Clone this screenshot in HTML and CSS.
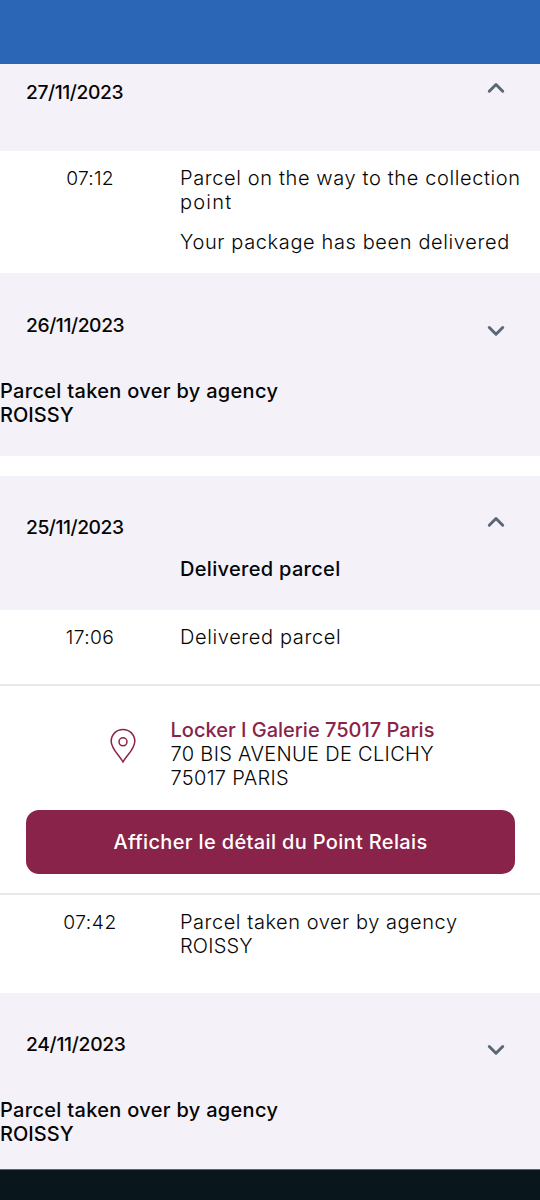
FILE: index.html
```html
<!DOCTYPE html>
<html lang="en">
<head>
<meta charset="utf-8">
<meta name="viewport" content="width=device-width, initial-scale=1">
<title>Parcel tracking</title>
<link rel="stylesheet" href="styles.css">
</head>
<body>
<div class="screen">
  <header class="status-bar"></header>

  <section class="day day-first">
    <h2 class="date">27/11/2023</h2>
    <svg class="chevron" viewBox="0 0 18 12"><path d="M2.3 9.2 9 2.5l6.700 6.700"/></svg>
  </section>
  <div class="event event-first">
    <time class="time time-0712">07:12</time>
    <div class="detail">
      <p class="text-long">Parcel on the way to the collection<br><span class="text-point">point</span></p>
      <p class="text-long note">Your package has been delivered</p>
    </div>
  </div>

  <section class="day day-closed">
    <div class="day-head">
      <h2 class="date">26/11/2023</h2>
      <svg class="chevron" viewBox="0 0 18 12"><path d="M2.3 2.500 9 9.200l6.700-6.700"/></svg>
    </div>
    <p class="summary">Parcel taken over by agency<br><span class="city">ROISSY</span></p>
  </section>

  <section class="day day-open">
    <div class="day-head">
      <h2 class="date date-25">25/11/2023</h2>
      <svg class="chevron" viewBox="0 0 18 12"><path d="M2.3 9.200 9 2.500l6.700 6.700"/></svg>
    </div>
    <p class="summary summary-inset">Delivered parcel</p>
  </section>
  <div class="event event-delivered">
    <time class="time time-1706">17:06</time>
    <p class="detail text-long">Delivered parcel</p>
  </div>

  <section class="relay">
    <div class="relay-info">
      <svg class="pin" viewBox="0 0 26 36"><path d="M13 34C9.500 27.500 1.200 21 1.200 13.200a11.800 11.800 0 0 1 23.600 0C24.800 21 16.500 27.500 13 34Z"/><circle cx="13" cy="13.800" r="4"/></svg>
      <address class="address">
        <strong class="relay-name">Locker I Galerie 75017 Paris</strong>
        <span>70 BIS AVENUE DE CLICHY</span>
        <span>75017 PARIS</span>
      </address>
    </div>
    <button class="relay-button" type="button">Afficher le détail du Point Relais</button>
  </section>

  <div class="event event-agency">
    <time class="time time-0742">07:42</time>
    <p class="detail text-agency">Parcel taken over by agency<br><span class="city-light">ROISSY</span></p>
  </div>

  <section class="day day-closed day-last">
    <div class="day-head">
      <h2 class="date date-24">24/11/2023</h2>
      <svg class="chevron" viewBox="0 0 18 12"><path d="M2.300 2.500 9 9.200l6.700-6.700"/></svg>
    </div>
    <p class="summary">Parcel taken over by agency<br><span class="city">ROISSY</span></p>
  </section>

  <footer class="nav-bar"></footer>
</div>
</body>
</html>
```

FILE: styles.css
```css
* { box-sizing: border-box; }
body {
  margin: 0;
  background: #fff;
  color: #050505;
  font: 300 20px/24px Inter, "Noto Sans", sans-serif;
}
h2, p { margin: 0; font-size: inherit; }
.screen {
  display: flex;
  flex-direction: column;
  width: 540px;
  height: 1200px;
  overflow: hidden;
  white-space: nowrap;
}
.status-bar { height: 64px; background: #2b65b5; }
.day { background: #f4f2f8; }
.day-head, .day-first {
  display: flex;
  justify-content: space-between;
  align-items: flex-start;
  padding-right: 35px;
  padding-left: 26px;
}
.date { font-size: 19.25px; font-weight: 500; letter-spacing: -0.42px; }
.date-25 { letter-spacing: -0.47px; }
.date-24 { letter-spacing: -0.3px; }
.chevron {
  width: 18px;
  height: 12px;
  fill: none;
  stroke: #5a6876;
  stroke-width: 3;
  stroke-linecap: round;
  stroke-linejoin: round;
}
.day-first { height: 87px; padding-top: 16px; }
.day-first .chevron { margin-top: 2px; }

.event { display: grid; grid-template-columns: 180px 1fr; }
.time { font-size: 19.25px; text-align: center; }
.time-0712 { letter-spacing: 0.17px; }
.time-1706 { letter-spacing: 0.35px; }
.time-0742 { letter-spacing: 0.55px; }
.text-long { letter-spacing: 0.62px; }
.text-point { letter-spacing: 1.2px; }
.text-agency { letter-spacing: 0.54px; }
.city-light { letter-spacing: 0.18px; }
.event-first { height: 122px; padding-top: 15px; }
.note { margin-top: 16px; }

.day-closed { height: 183px; padding-top: 40px; }
.day-closed .chevron { margin-top: 12px; }
.summary { font-weight: 500; letter-spacing: 0.31px; }
.day-closed .summary { margin-top: 42px; }
.city { letter-spacing: 0.03px; }
.day-open { height: 134px; margin-top: 20px; padding-top: 39px; }
.day-open .chevron { margin-top: 1px; }
.summary-inset { padding: 18px 0 0 180px; }
.event-delivered { height: 74px; padding-top: 15px; }

.relay {
  height: 211px;
  padding: 32px 25px 0 26px;
  border-top: 2px solid #e8e8e8;
  border-bottom: 2px solid #e8e8e8;
}
.relay-info { display: flex; gap: 35px; padding-left: 84px; }
.pin {
  width: 26px;
  height: 36px;
  margin-top: 10px;
  margin-left: -0.5px;
  fill: none;
  stroke: #8a2349;
  stroke-width: 1.5;
}
.address {
  display: flex;
  flex-direction: column;
  font-style: normal;
  letter-spacing: 0.32px;
}
.relay-name { color: #8a2349; font-weight: 500; letter-spacing: 0; }
.relay-button {
  display: block;
  width: 100%;
  height: 64px;
  margin-top: 20px;
  padding: 0;
  border: 0;
  border-radius: 13px;
  background: #8a2349;
  color: #fff;
  font: inherit;
  font-weight: 500;
  letter-spacing: 0.35px;
}
.event-agency { height: 98px; padding-top: 15px; }
.day-last { height: 176px; padding-top: 39px; }
.nav-bar { flex: 1; border-top: 1px solid #5d686c; background: #09161b; }
```
